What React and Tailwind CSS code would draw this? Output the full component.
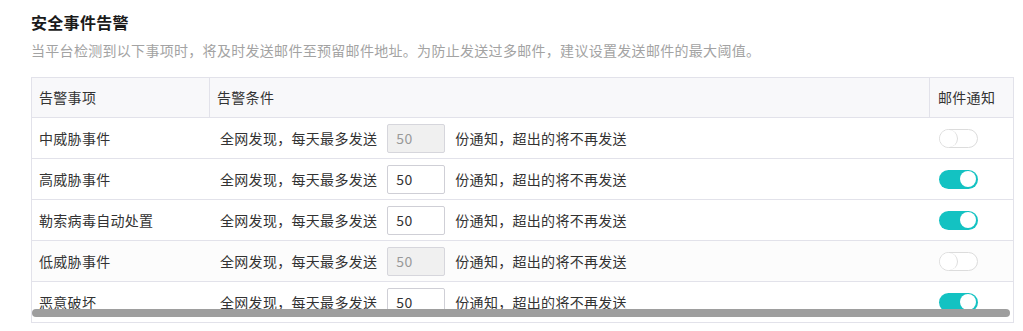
const rows = [
  { name: "中威胁事件", enabled: false },
  { name: "高威胁事件", enabled: true },
  { name: "勒索病毒自动处置", enabled: true },
  { name: "低威胁事件", enabled: false, shade: true },
  { name: "恶意破坏", enabled: true },
];

const Toggle = ({ on }) => (
  <div
    className={
      on
        ? "w-[39px] h-[19px] rounded-full bg-[#13c2c2] flex items-center justify-end pr-[2px]"
        : "w-[39px] h-[19px] rounded-full bg-white border border-[#dcdcdc] flex items-center"
    }
  >
    <div
      className={
        on
          ? "w-[16px] h-[16px] rounded-full bg-white"
          : "w-[18px] h-[17px] rounded-full bg-white border-r border-[#dcdcdc]"
      }
    />
  </div>
);

const App = () => {
  return (
    <div
      className="w-[1023px] h-[331px] bg-white pl-[31px] pt-[11px] overflow-hidden text-[#333]"
      style={{ fontFamily: '"Noto Sans CJK SC", "Noto Sans", sans-serif' }}
    >
      <h1 className="text-[16px] leading-[22px] font-bold tracking-[0.3px] text-[#1a1a1a]">安全事件告警</h1>
      <p className="mt-[7px] text-[14px] leading-[20px] tracking-[0.3px] text-[#a3a3a3]">
        当平台检测到以下事项时，将及时发送邮件至预留邮件地址。为防止发送过多邮件，建议设置发送邮件的最大阈值。
      </p>

      <div className="relative mt-[17px] w-[983px] h-[246px] border border-[#e2e2ea] overflow-hidden text-[14px] tracking-[0.3px]">
        <div className="grid grid-cols-[178px_720px_1fr] h-[40px] bg-[#f8f8fa] border-b border-[#e2e2ea]">
          <div className="flex items-center pl-[7px] border-r border-[#e2e2ea]">告警事项</div>
          <div className="flex items-center pl-[7px] border-r border-[#e2e2ea]">告警条件</div>
          <div className="flex items-center pl-[8px]">邮件通知</div>
        </div>

        {rows.map((row) => (
          <div
            key={row.name}
            className={`grid grid-cols-[178px_720px_1fr] h-[41px] border-b border-[#e2e2ea] ${
              row.shade ? "bg-[#fcfcfc]" : "bg-white"
            }`}
          >
            <div className="flex items-center pl-[7px]">{row.name}</div>
            <div className="flex items-center pl-[10px]">
              <span>全网发现，每天最多发送</span>
              <input
                type="text"
                defaultValue="50"
                disabled={!row.enabled}
                className={
                  row.enabled
                    ? "ml-[10px] w-[58px] h-[29px] px-[8px] border border-[#cfcfd6] rounded-[2px] bg-white text-[#333] outline-none"
                    : "ml-[10px] w-[58px] h-[29px] px-[8px] border border-[#d6d6dc] rounded-[2px] bg-[#f0f0f0] text-[#999] outline-none"
                }
              />
              <span className="ml-[10px]">份通知，超出的将不再发送</span>
            </div>
            <div className="flex items-center pl-[9px]">
              <Toggle on={row.enabled} />
            </div>
          </div>
        ))}

        <div className="absolute left-0 bottom-[5px] w-[978px] h-[8px] rounded-full bg-[#9e9e9e]" />
      </div>
    </div>
  );
};

export default App;
